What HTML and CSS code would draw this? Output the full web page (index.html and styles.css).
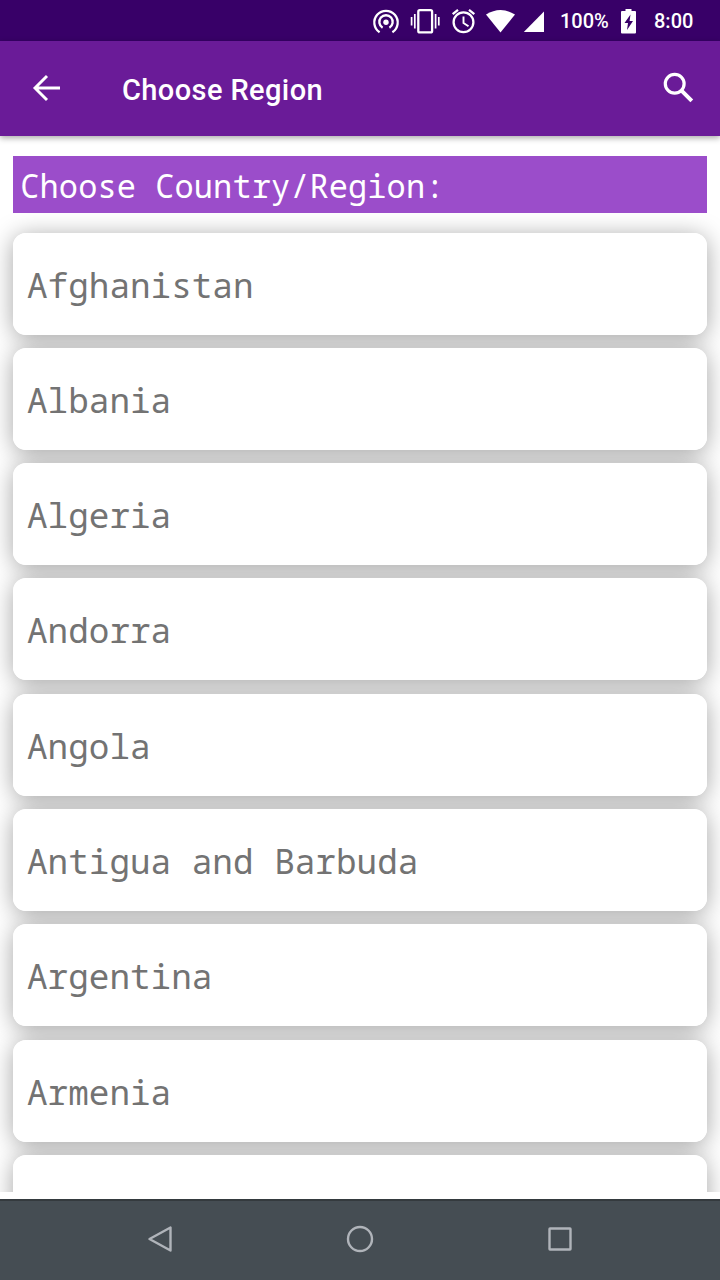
FILE: index.html
```html
<!DOCTYPE html>
<html lang="en">
<head>
<meta charset="utf-8">
<title>Choose Region</title>
<link rel="stylesheet" href="styles.css">
</head>
<body>
<div class="screen">
  <div class="status">
    <svg class="status-icons" width="186" height="40" viewBox="0 0 186 40">
      <g fill="none" stroke="#fff" stroke-width="2.3">
        <path d="M19.6 31.300A11.7 11.7 0 1 1 32.400 31.300"/>
        <path d="M22.600 26.700A6.700 6.700 0 1 1 29.400 26.700"/>
        <rect x="58.300" y="9.200" width="13.800" height="22.200" rx="1.500"/>
        <path d="M54.800 13v14.500M51.600 16v8.500M75.600 13v14.500M78.800 16v8.500" stroke-width="1.700"/>
        <circle cx="103.500" cy="21.300" r="9.900"/>
        <path d="M103.500 15.500v6.500l5 3.300" stroke-width="1.900"/>
        <path d="M92.700 13.200l5.300-4.400M114.300 13.200l-5.300-4.400"/>
      </g>
      <circle cx="26" cy="21.200" r="2.700" fill="#fff"/>
      <path d="M126 13.600Q140.500 4.400 155 13.600L140.500 31.600z" fill="#fff"/>
      <path d="M163.800 31L184 10.500V31z" fill="#fff"/>
    </svg>
    <span class="charge">100%</span>
    <svg class="battery" width="15" height="26" viewBox="0 0 15 26">
      <path fill="#fff" fill-rule="evenodd" d="M4.500 1h6v2H14q1 0 1 1v20.500q0 1-1 1H1q-1 0-1-1V4q0-1 1-1h3.500zM9.500 6.500L3.500 15H7l-1 7 6-9H8.600z"/>
    </svg>
    <span class="clock">8:00</span>
  </div>
  <header class="appbar">
    <svg class="back" width="32" height="32" viewBox="0 0 32 32" fill="none" stroke="#fff" stroke-width="2.900">
      <path d="M30 16H4.500M17 4L5 16l12 12"/>
    </svg>
    <h1 class="title">Choose Region</h1>
    <svg class="search" width="32" height="32" viewBox="0 0 32 32" fill="none" stroke="#fff">
      <circle cx="12.700" cy="11.800" r="9.400" stroke-width="3.200"/>
      <path d="M19.300 18.400l10.500 10.500" stroke-width="4"/>
    </svg>
  </header>
  <main class="content">
    <h2 class="prompt">Choose Country/Region:</h2>
    <ul class="list">
      <li class="card">Afghanistan</li>
      <li class="card">Albania</li>
      <li class="card">Algeria</li>
      <li class="card">Andorra</li>
      <li class="card">Angola</li>
      <li class="card">Antigua and Barbuda</li>
      <li class="card">Argentina</li>
      <li class="card">Armenia</li>
      <li class="card"></li>
    </ul>
  </main>
  <nav class="navbar">
    <svg width="32" height="32" viewBox="0 0 32 32"><path d="M5.500 16L26.500 4.500v23z"/></svg>
    <svg width="32" height="32" viewBox="0 0 32 32"><circle cx="16" cy="16" r="12"/></svg>
    <svg width="32" height="32" viewBox="0 0 32 32"><rect x="5.500" y="5.500" width="21" height="21" rx=".5"/></svg>
  </nav>
</div>
</body>
</html>
```
FILE: styles.css
```css
* { box-sizing: border-box; margin: 0; padding: 0; }
body { background: #fff; font-family: Roboto, sans-serif; }
.screen {
  width: 720px;
  height: 1280px;
  display: flex;
  flex-direction: column;
  overflow: hidden;
}
.status {
  flex: none;
  height: 41px;
  background: #380068;
  color: #fff;
  display: flex;
  align-items: center;
  padding-left: 360px;
  font-size: 20px;
  font-weight: 500;
  line-height: 40px;
}
.status-icons { flex: none; }
.charge { width: 61px; margin-left: 14px; }
.battery { flex: none; }
.clock { margin-left: 18px; }
.appbar {
  flex: none;
  height: 95px;
  padding: 0 26px 0 30px;
  display: flex;
  align-items: center;
  background: #6a1b98;
  color: #fff;
  position: relative;
  z-index: 1;
  box-shadow: 0 2px 6px rgba(0, 0, 0, .35);
}
.back { flex: none; margin-bottom: 2px; }
.title {
  flex: 1;
  margin: 2px 0 0 60px;
  font-size: 29px;
  font-weight: 500;
  letter-spacing: .4px;
}
.search { flex: none; margin-bottom: 2px; }
.content {
  flex: none;
  height: 1063px;
  padding: 20px 0 7px;
  display: flex;
  flex-direction: column;
  font-family: "Droid Sans Mono", "Noto Sans Mono", "DejaVu Sans Mono", monospace;
}
.prompt {
  flex: none;
  height: 56.500px;
  margin: 0 13.300px;
  padding-left: 7px;
  background: #9b4dca;
  color: #fff;
  font-size: 32px;
  font-weight: 400;
  line-height: 59px;
  letter-spacing: .08px;
}
.list {
  flex: 1;
  min-height: 0;
  padding: 20px 13.300px 0;
  display: flex;
  flex-direction: column;
  gap: 13.340px;
  list-style: none;
  overflow: hidden;
  isolation: isolate;
}
.card {
  flex: none;
  height: 102px;
  padding-left: 13.700px;
  border-radius: 13px;
  background: #fff;
  color: #737373;
  font-size: 34.300px;
  line-height: 103.500px;
  letter-spacing: .02px;
  position: relative;
}
.card::before {
  content: "";
  position: absolute;
  inset: 0;
  z-index: -1;
  border-radius: 13px;
  box-shadow: 0 3px 24px rgba(0, 0, 0, .36);
}
.navbar {
  flex: 1;
  display: flex;
  justify-content: center;
  align-items: center;
  gap: 168px;
  padding-bottom: 3px;
  border-top: 2px solid #343a3e;
  background: #454d53;
  fill: none;
  stroke: #b0b4ba;
  stroke-width: 2.400;
  stroke-linejoin: round;
}
```
